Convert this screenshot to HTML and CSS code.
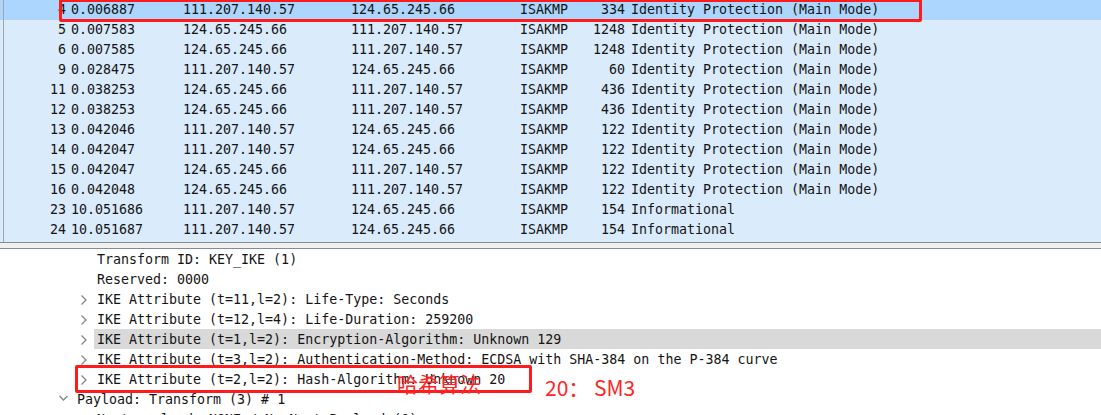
FILE: index.html
```html
<!DOCTYPE html>
<html>
<head>
<meta charset="utf-8">
<link rel="stylesheet" href="styles.css">
</head>
<body>
<div class="packets">
  <div class="prow sel"><span class="c0"></span><span class="no">4</span><span class="tm">0.006887</span><span class="ip">111.207.140.57</span><span class="ip">124.65.245.66</span><span class="pr">ISAKMP</span><span class="ln">334</span><span class="in">Identity Protection (Main Mode)</span></div>
  <div class="prow"><span class="c0"></span><span class="no">5</span><span class="tm">0.007583</span><span class="ip">124.65.245.66</span><span class="ip">111.207.140.57</span><span class="pr">ISAKMP</span><span class="ln">1248</span><span class="in">Identity Protection (Main Mode)</span></div>
  <div class="prow"><span class="c0"></span><span class="no">6</span><span class="tm">0.007585</span><span class="ip">124.65.245.66</span><span class="ip">111.207.140.57</span><span class="pr">ISAKMP</span><span class="ln">1248</span><span class="in">Identity Protection (Main Mode)</span></div>
  <div class="prow"><span class="c0"></span><span class="no">9</span><span class="tm">0.028475</span><span class="ip">111.207.140.57</span><span class="ip">124.65.245.66</span><span class="pr">ISAKMP</span><span class="ln">60</span><span class="in">Identity Protection (Main Mode)</span></div>
  <div class="prow"><span class="c0"></span><span class="no">11</span><span class="tm">0.038253</span><span class="ip">124.65.245.66</span><span class="ip">111.207.140.57</span><span class="pr">ISAKMP</span><span class="ln">436</span><span class="in">Identity Protection (Main Mode)</span></div>
  <div class="prow"><span class="c0"></span><span class="no">12</span><span class="tm">0.038253</span><span class="ip">124.65.245.66</span><span class="ip">111.207.140.57</span><span class="pr">ISAKMP</span><span class="ln">436</span><span class="in">Identity Protection (Main Mode)</span></div>
  <div class="prow"><span class="c0"></span><span class="no">13</span><span class="tm">0.042046</span><span class="ip">111.207.140.57</span><span class="ip">124.65.245.66</span><span class="pr">ISAKMP</span><span class="ln">122</span><span class="in">Identity Protection (Main Mode)</span></div>
  <div class="prow"><span class="c0"></span><span class="no">14</span><span class="tm">0.042047</span><span class="ip">111.207.140.57</span><span class="ip">124.65.245.66</span><span class="pr">ISAKMP</span><span class="ln">122</span><span class="in">Identity Protection (Main Mode)</span></div>
  <div class="prow"><span class="c0"></span><span class="no">15</span><span class="tm">0.042047</span><span class="ip">124.65.245.66</span><span class="ip">111.207.140.57</span><span class="pr">ISAKMP</span><span class="ln">122</span><span class="in">Identity Protection (Main Mode)</span></div>
  <div class="prow"><span class="c0"></span><span class="no">16</span><span class="tm">0.042048</span><span class="ip">124.65.245.66</span><span class="ip">111.207.140.57</span><span class="pr">ISAKMP</span><span class="ln">122</span><span class="in">Identity Protection (Main Mode)</span></div>
  <div class="prow"><span class="c0"></span><span class="no">23</span><span class="tm">10.051686</span><span class="ip">111.207.140.57</span><span class="ip">124.65.245.66</span><span class="pr">ISAKMP</span><span class="ln">154</span><span class="in">Informational</span></div>
  <div class="prow"><span class="c0"></span><span class="no">24</span><span class="tm">10.051687</span><span class="ip">111.207.140.57</span><span class="ip">124.65.245.66</span><span class="pr">ISAKMP</span><span class="ln">154</span><span class="in">Informational</span></div>
  <div class="pfill"><span class="c0"></span></div>
</div>
<div class="splitter"></div>
<div class="details">
  <div class="drow l4"><span class="chev"></span><span class="txt">Transform ID: KEY_IKE (1)</span></div>
  <div class="drow l4"><span class="chev"></span><span class="txt">Reserved: 0000</span></div>
  <div class="drow l4"><span class="chev"><svg width="16" height="20" viewBox="0 0 16 20"><polyline points="3.5,6.5 8,11 3.5,15.5" class="arr"/></svg></span><span class="txt">IKE Attribute (t=11,l=2): Life-Type: Seconds</span></div>
  <div class="drow l4"><span class="chev"><svg width="16" height="20" viewBox="0 0 16 20"><polyline points="3.5,6.5 8,11 3.5,15.5" class="arr"/></svg></span><span class="txt">IKE Attribute (t=12,l=4): Life-Duration: 259200</span></div>
  <div class="drow l4"><span class="chev"><svg width="16" height="20" viewBox="0 0 16 20"><polyline points="3.5,6.5 8,11 3.5,15.5" class="arr"/></svg></span><span class="txt hl">IKE Attribute (t=1,l=2): Encryption-Algorithm: Unknown 129</span></div>
  <div class="drow l4"><span class="chev"><svg width="16" height="20" viewBox="0 0 16 20"><polyline points="3.5,6.5 8,11 3.5,15.5" class="arr"/></svg></span><span class="txt">IKE Attribute (t=3,l=2): Authentication-Method: ECDSA with SHA-384 on the P-384 curve</span></div>
  <div class="drow l4"><span class="chev"><svg width="16" height="20" viewBox="0 0 16 20"><polyline points="3.5,6.5 8,11 3.5,15.5" class="arr"/></svg></span><span class="txt">IKE Attribute (t=2,l=2): Hash-Algorithm: Unknown 20</span></div>
  <div class="drow l3"><span class="chev"><svg width="16" height="20" viewBox="0 0 16 20"><polyline points="1.5,7 5.5,11 9.5,7" class="arr"/></svg></span><span class="txt">Payload: Transform (3) # 1</span></div>
  <div class="drow l4"><span class="chev"></span><span class="txt">Next payload: NONE / No Next Payload (0)</span></div>
</div>

<div class="mark mark-top"></div>
<div class="mark mark-hash"></div>
<div class="note note-cn">哈希算法</div>
<div class="note note-sm3">20： SM3</div>
</body>
</html>
```
FILE: styles.css
```css
html, body {
  margin: 0;
  padding: 0;
  background: #ffffff;
  overflow: hidden;
}
body {
  position: relative;
  width: 1101px;
  height: 415px;
  font-family: "DejaVu Sans Mono", "Liberation Mono", monospace;
  font-size: 13.3px;
  color: #141414;
}
.packets {
  height: 242px;
  background: #daebfc;
  border-bottom: 1px solid #868a94;
  overflow: hidden;
}
.prow, .pfill {
  display: grid;
  grid-template-columns: 4px 63px 116px 168px 169px 70px 35px 1fr;
  height: 20px;
  line-height: 19px;
  white-space: pre;
}
.pfill { height: 2px; }
.prow.sel { background: #acd6fd; }
.c0 {
  box-sizing: border-box;
  border-right: 1px solid #a2a6ae;
}
.no { text-align: right; padding-right: 1px; }
.tm { padding-left: 4px; }
.ln { text-align: right; }
.in { padding-left: 6px; }
.splitter {
  height: 5px;
  background: #f0f0f0;
  border-bottom: 1px solid #868a94;
}
.details {
  height: 166px;
  overflow: hidden;
}
.drow {
  display: flex;
  height: 20px;
  line-height: 20px;
}
.drow.l4 { padding-left: 78px; }
.drow.l3 { padding-left: 58px; }
.chev {
  width: 16px;
  flex: none;
  height: 20px;
}
.chev svg { display: block; }
.arr {
  fill: none;
  stroke: #8a8a8a;
  stroke-width: 1.4;
}
.txt {
  flex: 1;
  padding-left: 3px;
  padding-top: 1px;
  height: 20px;
  box-sizing: border-box;
  line-height: 20px;
  white-space: pre;
}
.txt.hl { background: #d9d9d9; }
.mark {
  position: absolute;
  border: 3px solid #ff1b1b;
  border-radius: 2px;
  box-sizing: border-box;
}
.mark-top { left: 59px; top: -1px; width: 863px; height: 23px; }
.mark-hash { left: 75px; top: 365px; width: 457px; height: 28px; }
.note {
  position: absolute;
  font-family: "Noto Sans CJK SC", "Noto Sans", sans-serif;
  font-size: 21px;
  line-height: 21px;
  color: #ff2424;
  white-space: pre;
}
.note-cn { left: 397px; top: 373px; }
.note-sm3 { left: 545px; top: 377px; }
```
